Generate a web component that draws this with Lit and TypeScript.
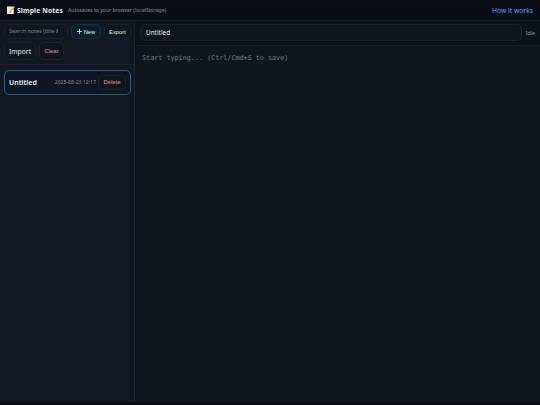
import {html, css, svg, LitElement} from 'lit';
import {customElement, property, state} from 'lit/decorators.js';

interface Note {
	title: string;
	updated: string;
}

@customElement('memo-icon')
export class MemoIcon extends LitElement {
	static styles = css`
		:host {
		    display: block;
		    width: 8px;
		    height: 8px;
		}

		svg {
		    display: block;
		}
	`;

	render() {
		return html`<svg width="8" height="8" viewBox="0 0 16 16">
			${svg`
				<rect x="0" y="1" width="13.5" height="15" fill="#f4f5f2"/>
				<path d="M3 4h6M3 7h4M3 13h7" stroke="#c3cacb" stroke-width="1"/>
				<path d="M5 13l1.2-3.8 7-8.2 2.3 1.8-7 8.2z" fill="#f2aa28"/>
				<path d="M12.6 2l1.2-1.7 2.2 1.7-1.4 1.7z" fill="#cf7268"/>
				<path d="M5 13l.6-2 1.6 1.2z" fill="#444"/>
			`}
		</svg>`;
	}
}

@customElement('note-card')
export class NoteCard extends LitElement {
	@property({type: Object}) note: Note = {title: '', updated: ''};

	static styles = css`
		:host {
		    display: block;
		}

		.card {
		    box-sizing: border-box;
		    display: flex;
		    align-items: center;
		    height: 25px;
		    padding: 0 4px 1px;
		    border: 1px solid #2d5a90;
		    border-radius: 5px;
		    background: #0d1723;
		}

		.title {
		    flex: 1;
		    font-size: 7px;
		    font-weight: 600;
		    color: #e6edf3;
		}

		.date {
		    margin-right: 2px;
		    font-size: 5.15px;
		    color: #87919b;
		}

		.delete {
		    box-sizing: border-box;
		    width: 28px;
		    height: 15px;
		    padding: 0;
		    border: 1px solid #27202b;
		    border-radius: 5px;
		    background: #0f1620;
		    color: #f09894;
		    font: 5.8px 'Liberation Sans', sans-serif;
		}
	`;

	render() {
		return html`<div class="card">
			<span class="title">${this.note.title}</span>
			<span class="date">${this.note.updated}</span>
			<button class="delete">Delete</button>
		</div>`;
	}
}

@customElement('app-root')
export class AppRoot extends LitElement {
	@state() notes: Note[] = [{title: 'Untitled', updated: '2025-08-23 12:17'}];

	static styles = css`
		*,
		*::before,
		*::after {
		    box-sizing: border-box;
		}

		:host {
		    display: grid;
		    grid-template-rows: 21px 1fr;
		    height: 405px;
		    padding-bottom: 3px;
		    box-sizing: border-box;
		    overflow: hidden;
		    background: #090c13;
		    color: #e6edf3;
		    font-family: 'Noto Sans', sans-serif;
		}

		.header {
		    display: flex;
		    align-items: center;
		    padding: 0 7px;
		    border-bottom: 1px solid #17212b;
		    background: linear-gradient(#0b0f18, #080e15);
		}

		.brand {
		    margin-left: 2px;
		    font-size: 6.8px;
		    font-weight: 700;
		    letter-spacing: 0.1px;
		}

		.hint {
		    flex: 1;
		    margin-left: 5px;
		    font-size: 5.12px;
		    color: #87919b;
		}

		.link {
		    color: #58a6ff;
		    font-size: 6.75px;
		    text-decoration: none;
		}

		.main {
		    display: grid;
		    grid-template-columns: 135px 1fr;
		    min-height: 0;
		}

		.sidebar {
		    border-right: 1px solid #19252f;
		    background: #111823;
		}

		.toolbar {
		    display: flex;
		    flex-wrap: wrap;
		    align-content: flex-start;
		    gap: 3px;
		    height: 44px;
		    padding: 3px 3px 0 4px;
		    border-bottom: 1px solid #19232e;
		}

		input {
		    border: 1px solid #19232e;
		    border-radius: 5px;
		    background: #0f1620;
		    color: #e6edf3;
		    outline: none;
		}

		.search {
		    width: 64px;
		    height: 15px;
		    padding: 0 9px 1px 4px;
		    font: 5.4px 'Noto Sans', sans-serif;
		}

		.search::placeholder {
		    color: #7c838b;
		}

		.button {
		    height: 15px;
		    padding: 0;
		    border: 1px solid #19232e;
		    border-radius: 5px;
		    background: #0f1620;
		    color: #e6edf3;
		    font: 5.8px 'Liberation Sans', sans-serif;
		    text-align: center;
		}

		.new {
		    display: flex;
		    align-items: center;
		    justify-content: center;
		    gap: 2px;
		    width: 30px;
		    border-color: #17304a;
		    background: #0e1d2c;
		}

		.plus {
		    width: 5px;
		    height: 5px;
		    background:
		        linear-gradient(#b4bec8, #b4bec8) center / 5px 1px no-repeat,
		        linear-gradient(#b4bec8, #b4bec8) center / 1px 5px no-repeat;
		}

		.export {
		    width: 27px;
		}

		.import {
		    display: grid;
		    place-items: center;
		    width: 32px;
		    height: 18px;
		    font: 6.8px 'Noto Sans', sans-serif;
		}

		.clear {
		    width: 25px;
		    height: 18px;
		    border-color: #27202b;
		    color: #f09894;
		}

		.list {
		    padding: 5px 3px 0 4px;
		}

		.editor {
		    display: grid;
		    grid-template-rows: 25px 1fr;
		    min-width: 0;
		    background: #0f1620;
		}

		.titlebar {
		    display: flex;
		    align-items: center;
		    gap: 3px;
		    padding: 0 5px 1px;
		    border-bottom: 1px solid #17212b;
		    background: #0b121a;
		}

		.title {
		    flex: 1;
		    min-width: 0;
		    height: 17px;
		    padding: 0 5px;
		    font: 6.4px 'Noto Sans', sans-serif;
		}

		.status {
		    font-size: 5.4px;
		    color: #87919b;
		}

		.content {
		    width: 100%;
		    height: 100%;
		    padding: 7px;
		    border: 0;
		    outline: none;
		    resize: none;
		    background: #0f1620;
		    color: #e6edf3;
		    font: 6.75px/10px 'DejaVu Sans Mono', monospace;
		}

		.content::placeholder {
		    color: #757b82;
		}
	`;

	render() {
		return html`
			<header class="header">
				<memo-icon></memo-icon>
				<span class="brand">Simple Notes</span>
				<span class="hint">Autosaves to your browser (localStorage)</span>
				<a class="link" href="#">How it works</a>
			</header>
			<main class="main">
				<aside class="sidebar">
					<div class="toolbar">
						<input class="search" placeholder="Search notes (title &amp; content)">
						<button class="button new"><i class="plus"></i>New</button>
						<button class="button export">Export</button>
						<label class="button import">Import</label>
						<button class="button clear">Clear</button>
					</div>
					<div class="list">
						${this.notes.map((note) => html`<note-card .note=${note}></note-card>`)}
					</div>
				</aside>
				<section class="editor">
					<div class="titlebar">
						<input class="title" .value=${this.notes[0].title}>
						<span class="status">Idle</span>
					</div>
					<textarea class="content" placeholder="Start typing... (Ctrl/Cmd+S to save)"></textarea>
				</section>
			</main>
		`;
	}
}
